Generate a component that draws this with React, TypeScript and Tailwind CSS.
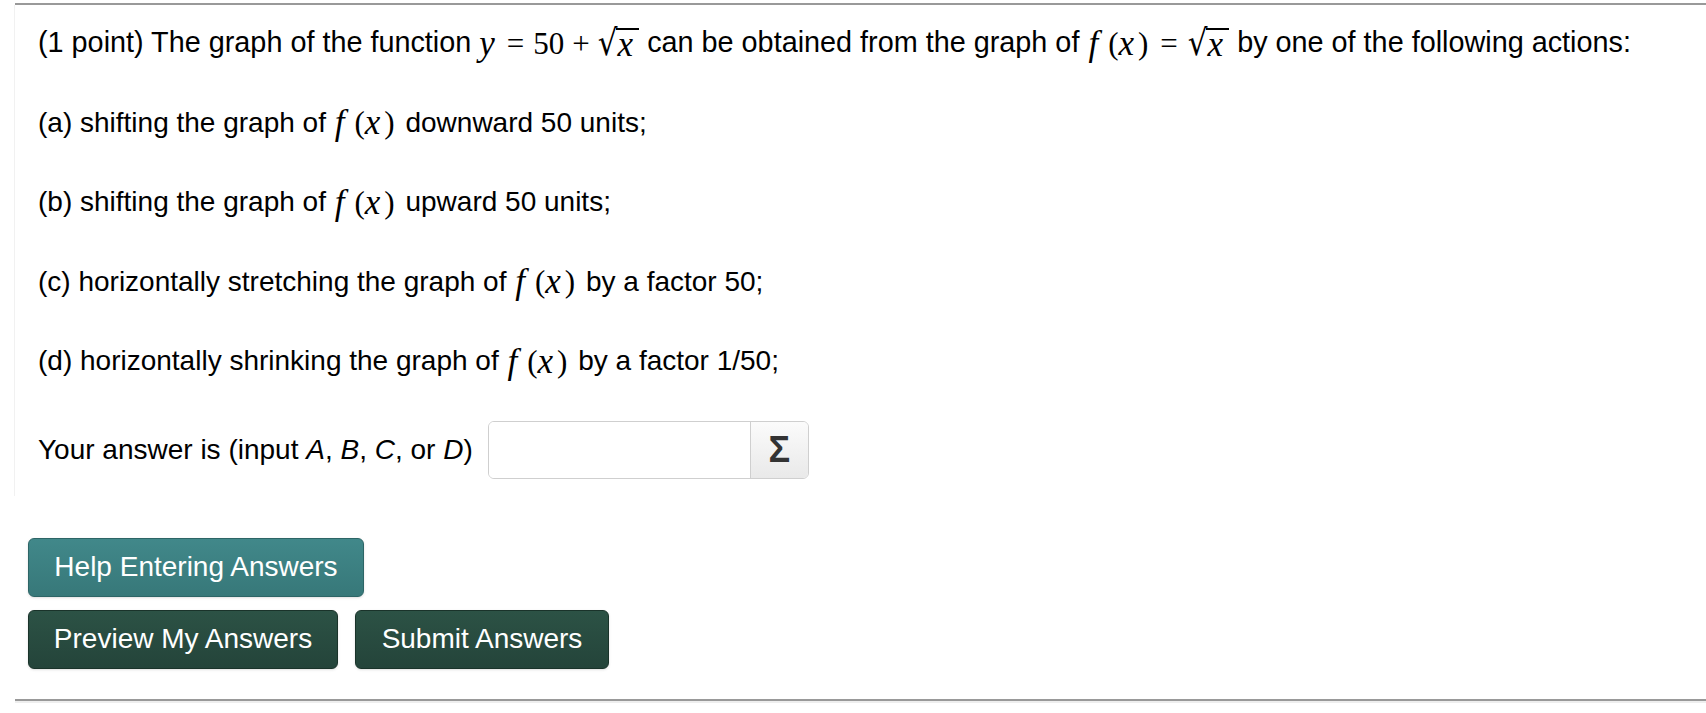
import React from 'react';

// radical with an overbar on the radicand
const Sqrt: React.FC<{ children: React.ReactNode }> = ({ children }) => (
    <span className="inline-flex items-start h-[34px]">
        <span className="font-['DejaVu_Serif'] text-[31px] leading-[34px] -mr-[2px] scale-y-[1.15] origin-bottom translate-y-[2px]">√</span>
        <span className="border-t-[2px] border-black leading-[30px] mt-[2px] pl-[2px] pr-[6px]">{children}</span>
    </span>
);

const M: React.FC<{ children: React.ReactNode }> = ({ children }) => (
    <span className="inline-flex items-center font-['Liberation_Serif'] text-[31px] leading-none">{children}</span>
);

const I: React.FC<{ children: React.ReactNode }> = ({ children }) => (
    <i className="font-['Liberation_Serif'] text-[35px]">{children}</i>
);

const Fx = () => (
    <M>
        <span className="ml-[1px]"><I>f</I></span>
        <span className="ml-[10px]">(</span>
        <I>x</I>
        <span className="ml-[4px] mr-[3px]">)</span>
    </M>
);

const Line: React.FC<{ children: React.ReactNode }> = ({ children }) => (
    <div className="h-[32px] flex items-center whitespace-nowrap">{children}</div>
);

export default function App() {
    return (
        <div className="min-h-screen bg-white text-black font-['Liberation_Sans',Arial,sans-serif] text-[28px]">
            <div className="pt-[3px] pl-[15px]">
                {/* top rule */}
                <div className="border-t-[2px] border-[#999]"></div>

                {/* problem body */}
                <div className="-ml-[1px] border-l border-[#f1f1f1] pl-[23px] pt-[22px] pb-[17px] flex flex-col gap-[47.5px]">
                    <Line>
                        <span className="text-[28.8px]">(1 point) The graph of the function&nbsp;</span>
                        <M>
                            <I>y</I>
                            <span className="ml-[12px] mr-[9px]">=</span>
                            <span>50</span>
                            <span className="mx-[8px]">+</span>
                            <Sqrt><I>x</I></Sqrt>
                        </M>
                        <span className="text-[28.8px]">&nbsp;can be obtained from the graph of&nbsp;</span>
                        <M>
                            <span className="ml-[1px]"><I>f</I></span>
                            <span className="ml-[10px]">(</span>
                            <I>x</I>
                            <span className="ml-[4px]">)</span>
                            <span className="ml-[12px] mr-[10px]">=</span>
                            <Sqrt><I>x</I></Sqrt>
                        </M>
                        <span className="text-[28.8px]">&nbsp;by one of the following actions:</span>
                    </Line>
                    <Line>
                        <span>(a) shifting the graph of&nbsp;</span><Fx /><span>&nbsp;downward 50 units;</span>
                    </Line>
                    <Line>
                        <span>(b) shifting the graph of&nbsp;</span><Fx /><span>&nbsp;upward 50 units;</span>
                    </Line>
                    <Line>
                        <span>(c) horizontally stretching the graph of&nbsp;</span><Fx /><span>&nbsp;by a factor 50;</span>
                    </Line>
                    <Line>
                        <span>(d) horizontally shrinking the graph of&nbsp;</span><Fx /><span>&nbsp;by a factor 1/50;</span>
                    </Line>

                    {/* answer row */}
                    <div className="-mt-[4px] flex items-center gap-[15px] whitespace-nowrap">
                        <span>
                            Your answer is (input <i>A</i>, <i>B</i>, <i>C</i>, or <i>D</i>)
                        </span>
                        <div className="flex h-[58px] w-[321px] rounded-[6px] border border-[#cfcfcf] overflow-hidden">
                            <input className="flex-1 min-w-0 bg-white outline-none px-3" />
                            <div className="w-[58px] flex items-center justify-center border-l border-[#cfcfcf] bg-gradient-to-b from-[#fbfbfb] to-[#e9e9e9] font-['Liberation_Sans'] font-bold text-[#333] text-[36px] leading-none">
                                Σ
                            </div>
                        </div>
                    </div>
                </div>

                {/* buttons */}
                <div className="pl-[13px] pt-[42px] flex flex-col gap-[13px]">
                    <div>
                        <button className="h-[59px] w-[336px] rounded-[6px] border border-[#2d6566] bg-gradient-to-b from-[#41888a] to-[#377879] text-white text-[28px] shadow-sm">
                            Help Entering Answers
                        </button>
                    </div>
                    <div className="flex gap-[17px]">
                        <button className="h-[59px] w-[310px] rounded-[6px] border border-[#1a332a] bg-gradient-to-b from-[#2c5245] to-[#24443a] text-white text-[28px] shadow-sm">
                            Preview My Answers
                        </button>
                        <button className="h-[59px] w-[254px] rounded-[6px] border border-[#1a332a] bg-gradient-to-b from-[#2c5245] to-[#24443a] text-white text-[28px] shadow-sm">
                            Submit Answers
                        </button>
                    </div>
                </div>

                {/* bottom rule */}
                <div className="mt-[30px] border-t-[2px] border-[#999]"></div>
                <div className="border-t-[2px] border-[#eee]"></div>
            </div>
        </div>
    );
}
